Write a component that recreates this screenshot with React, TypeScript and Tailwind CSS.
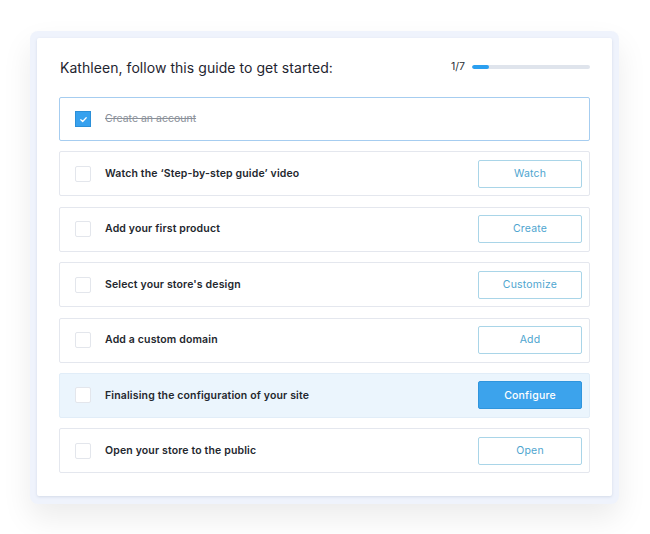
import React from "react";

const steps = [
  { label: "Watch the \u2018Step-by-step guide\u2019 video", action: "Watch" },
  { label: "Add your first product", action: "Create" },
  { label: "Select your store's design", action: "Customize" },
  { label: "Add a custom domain", action: "Add" },
  { label: "Finalising the configuration of your site", action: "Configure", active: true },
  { label: "Open your store to the public", action: "Open" },
];

export default function App() {
  return (
    <div className="w-[650px] h-[534px] bg-white pt-[31px] pl-[30px]" style={{ fontFamily: "Inter, 'Open Sans', sans-serif" }}>
      <div className="w-[589px] h-[473px] rounded-[8px] bg-[#eff3fc] p-[7px] shadow-[0_14px_30px_rgba(0,0,0,0.08)]">
        <div className="w-[575px] h-[458px] bg-white rounded-[2px] shadow-[0_1px_3px_rgba(60,80,120,0.15)] pt-[20px] px-[22px]">
          <div className="flex items-center justify-between h-[18px] pl-[1px]">
            <div className="text-[14px] text-[#1f2530] tracking-[0.05px]">Kathleen, follow this guide to get started:</div>
            <div className="flex items-center">
              <span className="text-[10.5px] text-[#2b2f36] mr-[7px]">1/7</span>
              <div className="w-[118px] h-[4px] rounded-full bg-[#dfe4ec] overflow-hidden">
                <div className="h-full w-[17px] rounded-full bg-[#2a9ff0]" />
              </div>
            </div>
          </div>
          <div className="mt-[21px] flex flex-col gap-[10.4px]">
            <div className="h-[44px] border border-[#a6cdf0] rounded-[2px] flex items-center pl-[15px]">
              <div className="w-[16px] h-[16px] bg-[#37a1ee] border border-[#2b8fd8] flex items-center justify-center">
                <svg width="9" height="9" viewBox="0 0 10 10" fill="none">
                  <path d="M2 5.2 L4.1 7.2 L8 3" stroke="white" strokeWidth="1.4" strokeLinecap="round" strokeLinejoin="round" />
                </svg>
              </div>
              <span className="ml-[14px] text-[10.5px] text-[#8a9099] line-through">Create an account</span>
            </div>
            {steps.map((s) => (
              <div
                key={s.label}
                className={
                  s.active
                    ? "h-[45px] border border-[#e1edf8] bg-[#ebf5fd] rounded-[2px] flex items-center pl-[15px] pr-[7px]"
                    : "h-[45px] border border-[#e4e7ee] bg-white rounded-[2px] flex items-center pl-[15px] pr-[7px]"
                }
              >
                <div className="w-[16px] h-[16px] bg-white border border-[#e3e6ec] rounded-[2px]" />
                <span className="ml-[14px] text-[10.5px] font-semibold text-[#23272e] tracking-[0.15px] flex-1">{s.label}</span>
                {s.active ? (
                  <button className="w-[104px] h-[28px] bg-[#3ca3ec] border border-[#2f95dd] rounded-[2px] text-[10.5px] font-medium text-white tracking-[0.2px]">
                    {s.action}
                  </button>
                ) : (
                  <button className="w-[104px] h-[28px] bg-white border border-[#a9d5e8] rounded-[2px] text-[10.5px] text-[#4ea5cf] tracking-[0.2px]">
                    {s.action}
                  </button>
                )}
              </div>
            ))}
          </div>
        </div>
      </div>
    </div>
  );
}
